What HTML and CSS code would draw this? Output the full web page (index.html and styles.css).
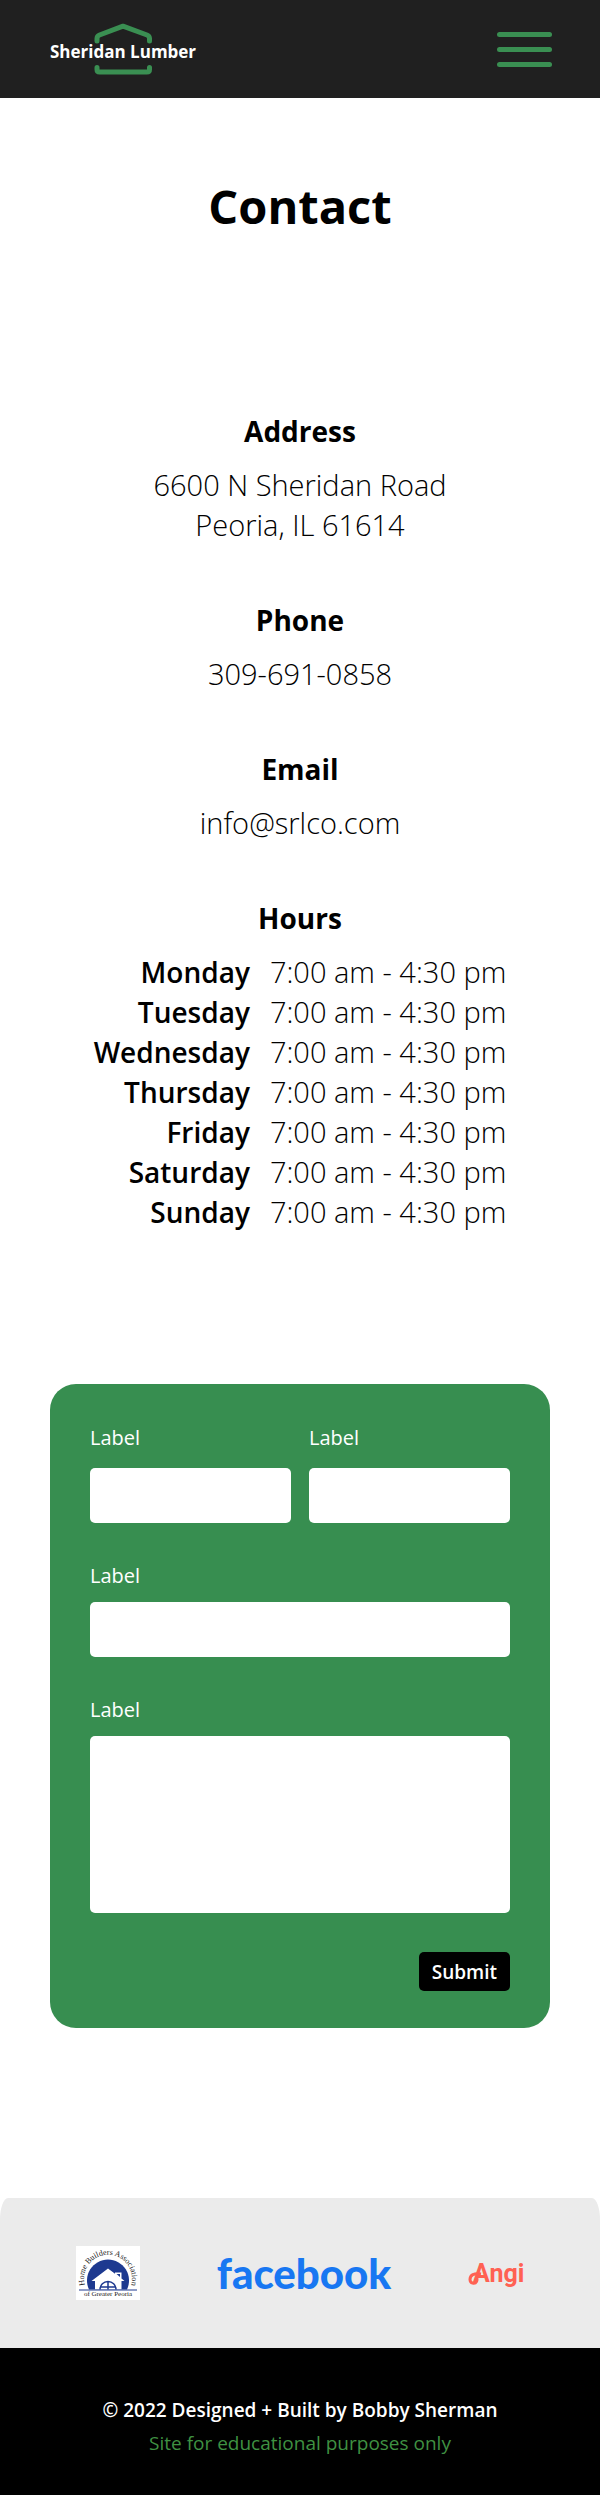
FILE: index.html
```html
<!DOCTYPE html>
<html lang="en">
<head>
<meta charset="utf-8">
<meta name="viewport" content="width=device-width, initial-scale=1">
<title>Contact | Sheridan Lumber</title>
<link rel="stylesheet" href="styles.css">
</head>
<body>
<header class="site-header">
  <a class="brand" href="#" aria-label="Sheridan Lumber home">
    <svg width="148" height="54" viewBox="0 0 148 54" aria-hidden="true">
      <g class="brand-house">
        <path d="M47 19V16.500Q47 14 49.500 13L73 4.200L97 13Q99.500 14 99.500 16.500V19"/>
        <path d="M47 45.500V47.500Q47 50 49.500 50H97Q99.500 50 99.500 47.500V45.500"/>
      </g>
      <text class="brand-name" x="0" y="36">Sheridan Lumber</text>
    </svg>
  </a>
  <button class="menu-button" type="button" aria-label="Open menu">
    <span class="menu-bar"></span>
    <span class="menu-bar"></span>
    <span class="menu-bar"></span>
  </button>
</header>

<main class="page">
  <h1 class="page-title">Contact</h1>

  <div class="details">
    <section class="detail">
      <h2 class="detail-title">Address</h2>
      <p class="detail-text">6600 N Sheridan Road<br>Peoria, IL 61614</p>
    </section>
    <section class="detail">
      <h2 class="detail-title">Phone</h2>
      <p class="detail-text"><a href="tel:3096910858">309-691-0858</a></p>
    </section>
    <section class="detail">
      <h2 class="detail-title">Email</h2>
      <p class="detail-text"><a href="mailto:info@srlco.com">info@srlco.com</a></p>
    </section>
    <section class="detail">
      <h2 class="detail-title">Hours</h2>
      <table class="hours">
        <tbody>
          <tr><th scope="row">Monday</th><td>7:00 am - 4:30 pm</td></tr>
          <tr><th scope="row">Tuesday</th><td>7:00 am - 4:30 pm</td></tr>
          <tr><th scope="row">Wednesday</th><td>7:00 am - 4:30 pm</td></tr>
          <tr><th scope="row">Thursday</th><td>7:00 am - 4:30 pm</td></tr>
          <tr><th scope="row">Friday</th><td>7:00 am - 4:30 pm</td></tr>
          <tr><th scope="row">Saturday</th><td>7:00 am - 4:30 pm</td></tr>
          <tr><th scope="row">Sunday</th><td>7:00 am - 4:30 pm</td></tr>
        </tbody>
      </table>
    </section>
  </div>

  <form class="contact-form">
    <div class="name-row">
      <div class="field field-name">
        <label for="first">Label</label>
        <input id="first" type="text">
      </div>
      <div class="field field-name">
        <label for="last">Label</label>
        <input id="last" type="text">
      </div>
    </div>
    <div class="field">
      <label for="email">Label</label>
      <input id="email" type="text">
    </div>
    <div class="field">
      <label for="message">Label</label>
      <textarea id="message"></textarea>
    </div>
    <button class="submit" type="submit">Submit</button>
  </form>
</main>

<div class="partners">
  <a class="partner" href="#" aria-label="Home Builders Association of Greater Peoria">
    <svg width="64" height="54" viewBox="0 0 64 54" aria-hidden="true">
      <rect width="64" height="54" fill="#fff"/>
      <path d="M13 43.500A21 21 0 1 1 51 43.500Z" fill="#1d3990"/>
      <path d="M15.500 35L32 22.500L39 27.800V26.500H45.500V32.500L48.500 35H45.500V43.500H19V35Z" fill="#fff"/>
      <path d="M40.500 28H44V31Z" fill="#1d3990"/>
      <path d="M24 43.500A8 8 0 0 1 40 43.500M32 36V43.500M25 41H39" fill="none" stroke="#1d3990" stroke-width="1.500"/>
      <path d="M3 44H61" stroke="#1d3990" stroke-width="1"/>
      <path id="hba-arc" d="M12 46A24 24 0 1 1 52 46" fill="none"/>
      <text class="hba-text hba-ring" text-anchor="middle"><textPath href="#hba-arc" startOffset="50%">Home Builders Association</textPath></text>
      <text class="hba-text hba-base" x="32" y="50" text-anchor="middle">of Greater Peoria</text>
    </svg>
  </a>
  <a class="partner facebook" href="#">facebook</a>
  <a class="partner" href="#" aria-label="Angi">
    <svg width="56" height="36" viewBox="0 0 56 36" aria-hidden="true">
      <text class="angi-text" x="5" y="27">Angi</text>
      <path d="M13 19C6 18 2 20 2 24.500C2 28.500 7 29.500 8.500 26.500C9.500 24.500 9 23 8 21.500" fill="none" stroke="#ff6153" stroke-width="3"/>
    </svg>
  </a>
</div>

<footer class="site-footer">
  <p class="credit">© 2022 Designed + Built by Bobby Sherman</p>
  <p class="notice">Site for educational purposes only</p>
</footer>
</body>
</html>
```

FILE: styles.css
```css
* {
  box-sizing: border-box;
}

body {
  margin: 0;
  background: #fff;
  color: #000;
  font-family: "Open Sans", "Noto Sans", sans-serif;
  font-size: 28px;
  line-height: 40px;
}

h1, h2, p {
  margin: 0;
}

a {
  color: inherit;
  text-decoration: none;
}

svg {
  display: block;
}

.site-header {
  display: flex;
  align-items: center;
  justify-content: space-between;
  padding: 22px 48px 22px 50px;
  background: #202020;
}

.brand-house {
  fill: none;
  stroke: #3a8f52;
  stroke-width: 5;
  stroke-linecap: round;
  stroke-linejoin: round;
}

.brand-name {
  fill: #fff;
  font-size: 17px;
  font-weight: 700;
}

.menu-button {
  display: flex;
  flex-direction: column;
  gap: 10px;
  width: 55px;
  padding: 0;
  border: 0;
  background: none;
}

.menu-bar {
  height: 5px;
  border-radius: 3px;
  background: #3a8f52;
}

.page {
  padding: 75px 50px 170px;
}

.page-title {
  font-size: 47px;
  line-height: 66px;
  text-align: center;
}

.details {
  display: flex;
  flex-direction: column;
  gap: 55px;
  margin-top: 172px;
  text-align: center;
}

.detail {
  display: flex;
  flex-direction: column;
  align-items: center;
  gap: 14px;
}

.detail-title {
  font-size: 28px;
  font-weight: 700;
}

.detail-text {
  font-size: 29px;
  font-weight: 350;
}

.hours {
  border-collapse: collapse;
}

.hours th {
  padding: 0 20px 0 0;
  font-weight: 600;
  text-align: right;
}

.hours td {
  padding: 0;
  font-size: 29px;
  font-weight: 350;
  white-space: nowrap;
}

.contact-form {
  display: flex;
  flex-direction: column;
  gap: 39px;
  margin-top: 152px;
  padding: 40px 40px 37px;
  border-radius: 26px;
  background: #378e50;
}

.name-row {
  display: grid;
  grid-template-columns: 1fr 1fr;
  gap: 18px;
}

.field {
  display: flex;
  flex-direction: column;
  gap: 12px;
}

.field-name {
  gap: 16px;
}

.field label {
  color: #fff;
  font-size: 20px;
  line-height: 28px;
}

.field input,
.field textarea {
  width: 100%;
  height: 55px;
  padding: 8px 12px;
  border: 0;
  border-radius: 5px;
  background: #fff;
  font: inherit;
  font-size: 20px;
}

.field textarea {
  height: 177px;
  resize: none;
}

.submit {
  align-self: flex-end;
  padding: 6px 13px 5px;
  border: 0;
  border-radius: 5px;
  background: #000;
  color: #fff;
  font-family: inherit;
  font-size: 19px;
  font-weight: 600;
  line-height: 28px;
}

.partners {
  display: flex;
  align-items: center;
  justify-content: space-evenly;
  min-height: 150px;
  border-radius: 8px 8px 0 0 / 22px 22px 0 0;
  background: #ebebeb;
}

.hba-text {
  fill: #222;
  font-family: "Liberation Serif", serif;
}

.hba-ring {
  font-size: 8px;
}

.hba-base {
  font-size: 7px;
}

.facebook {
  color: #1877f2;
  font-family: Lato, sans-serif;
  font-size: 42px;
  font-weight: 900;
}

.angi-text {
  fill: #ff6153;
  font-family: Roboto, sans-serif;
  font-size: 25px;
  font-weight: 700;
}

.site-footer {
  padding: 46px 20px 35px;
  background: #000;
  font-size: 19px;
  line-height: 33px;
  text-align: center;
}

.credit {
  color: #fff;
  font-weight: 600;
}

.notice {
  color: #3f9142;
}
```
